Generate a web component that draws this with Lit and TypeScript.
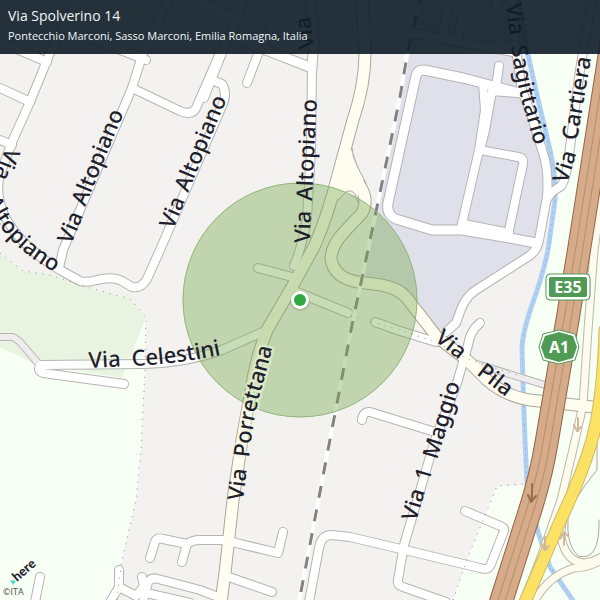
import { LitElement, html, svg, css } from "lit";
import { customElement } from "lit/decorators.js";

type Kind = "street" | "wide" | "track" | "main" | "ramp" | "lane";
interface Road { kind: Kind; d: string; }
interface Label { text: string; d: string; halo?: boolean; }

const roads: Road[] = [
  // north-west quarter
  { kind: "street", d: "M77,0 L50,53 L30,102 L12,142 L1,172 Q-6,190 4,215 Q20,246 60,270 L80,281 Q86,283 97,280 Q112,276 122,281 L132,287 Q141,289 147,279 L160,250 L222,106 Q228,94 222,84 L212,80" },
  { kind: "street", d: "M204,98 L222,53 L244,0" },
  { kind: "street", d: "M0,88 L28,101" },
  { kind: "street", d: "M0,140 L12,145" },
  { kind: "street", d: "M0,42 L47,62" },
  { kind: "street", d: "M62,27 L146,60" },
  { kind: "street", d: "M168,0 L143,53 L132,88 L63,250 L59,268" },
  { kind: "street", d: "M132,88 L180,111 Q192,116 196,108 L220,53" },
  { kind: "street", d: "M192,-2 L235,18" },
  { kind: "street", d: "M270,28 L258,54 L247,83" },
  { kind: "wide", d: "M240,40 L312,68" },
  { kind: "wide", d: "M310,0 L314,40 L312,66" },
  { kind: "street", d: "M312,66 L311,150 L307,217 Q303,244 294,266" },
  // around the marker
  { kind: "street", d: "M258,268 L292,277" },
  { kind: "street", d: "M292,290 L348,313" },
  { kind: "street", d: "M375,322 L400,331 L436,342" },
  { kind: "track", d: "M470,362 L545,385" },
  { kind: "track", d: "M-3,337 L13,337 L19,341 L38,363" },
  { kind: "street", d: "M265,331 L256,335 L222,350 Q186,363 143,364 L41,365 Q36,370 43,373 L124,384" },
  // south-west
  { kind: "street", d: "M40,577 L35,602" },
  { kind: "street", d: "M150,558 L155,542 Q157,537 163,539 L187,544 Q192,540 200,540 L228,540" },
  { kind: "street", d: "M187,544 L182,562" },
  { kind: "street", d: "M232,542 L278,553 L283,532" },
  { kind: "street", d: "M229,577 L272,592" },
  { kind: "street", d: "M142,577 L144,586 L136,596 L119,587 L110,602" },
  { kind: "street", d: "M119,570 L119,587" },
  { kind: "street", d: "M143,602 L148,582 Q151,577 158,579 L200,590 L218,597" },
  { kind: "street", d: "M146,593 L190,603" },
  // south-east
  { kind: "street", d: "M309,602 L319,548 Q321,535 332,535 L350,537 L405,550 L480,568 Q489,571 491,564 L504,531 Q505,527 498,525 L465,511" },
  { kind: "street", d: "M480,323 Q470,331 468,345 L457,383 L435,440 L404,545 L398,580 Q397,585 403,587 L446,602" },
  { kind: "street", d: "M362,420 Q363,411 370,412 L435,432" },
  // business park
  { kind: "wide", d: "M520,93 L463,78 L424,70 Q417,70 416,76 L388,203 Q386,215 396,219 L432,230 L462,230 L510,238 L536,243" },
  { kind: "street", d: "M499,66 L496,87" },
  { kind: "street", d: "M483,84 L485,110 L479,150 L461,228" },
  { kind: "street", d: "M518,93 L492,91 L485,130 L480,150" },
  { kind: "street", d: "M480,150 L518,157 Q524,158 523,164 L508,235" },
  { kind: "street", d: "M464,224 L509,233" },
  { kind: "street", d: "M413,33 L513,52" },
  { kind: "street", d: "M447,10 L442,36" },
  { kind: "street", d: "M462,15 L458,39" },
  { kind: "street", d: "M497,-3 L496,9" },
  { kind: "street", d: "M496,41 L511,48" },
  { kind: "street", d: "M512,0 L516,50 L522,90 L533,120 L543,153 Q549,170 547,197 L539,240 Q537,252 526,258 L476,290 Q465,297 460,312 L456,323 L446,332" },
  { kind: "street", d: "M547,199 L552,192 L561,186 Q566,180 569,155 L580,70 L592,0" },
  // main road, its ramp, and the lanes by the motorway
  { kind: "lane", d: "M604,180 L594,250 L588,330 L583,405 L574,445 L561,500 L540,560 L524,600" },
  { kind: "lane", d: "M568,500 Q560,525 561,537 Q566,562 584,563 Q594,562 603,556" },
  { kind: "lane", d: "M603,559 Q588,568 574,568 Q548,576 534,602" },
  { kind: "ramp", d: "M347,158 Q350,170 360,186 Q369,200 362,213 L345,231 Q331,246 331,259 Q334,278 358,282 L381,285 Q398,288 406,297 L437,337 L467,360 L487,380 Q505,396 530,400 L603,408" },
  { kind: "main", d: "M362,-2 L365,53 Q365,85 353,120 L338,175 Q328,215 315,245 L292,287 L267,330 Q256,358 252,385 L242,440 L233,500 L225,573 L221,602" },
];

const labels: Label[] = [
  { text: "Via", d: "M71,245 L84,214" },
  { text: "Altopiano", d: "M85,207 L125,110" },
  { text: "Via", d: "M173,230 L186,199" },
  { text: "Altopiano", d: "M188,193 L228,96" },
  { text: "Via", d: "M310,243 L311,205" },
  { text: "Altopiano", d: "M312,201 L317,95" },
  { text: "Via", d: "M314,48 L309,8" },
  { text: "Via", d: "M6,147 L-8,182" },
  { text: "Altopiano", d: "M-14,200 Q4,248 64,277" },
  { text: "Via", d: "M89,368 L124,366" },
  { text: "Celestini", d: "M132,366 Q180,364 229,353" },
  { text: "Via", d: "M243,501 L247,468" },
  { text: "Porrettana", d: "M249,458 Q254,410 264,380 Q270,360 276,328", halo: true },
  { text: "Via", d: "M506,4 L510,40" },
  { text: "Sagittario", d: "M511,46 Q516,82 525,112 L538,157" },
  { text: "Via", d: "M567,184 L578,148" },
  { text: "Cartiera", d: "M577,141 L592,52" },
  { text: "Via", d: "M434,340 L464,364" },
  { text: "Pila", d: "M476,374 L512,402" },
  { text: "Via", d: "M416,522 L427,485" },
  { text: "1", d: "M429,482 L434,465" },
  { text: "Maggio", d: "M437,460 L462,378" },
];

const motorway = "M612,40 L579,250 L568,317 L547,440 Q541,478 527,520 L501,602";
const highway = "M605,330 Q603,400 592,440 Q582,475 561,519 L525,602";
const stream = "M519,0 L527,50 L537,95 L550,150 Q556,175 555,200 L548,250 Q543,275 531,308 Q522,335 522,350 L523,383 L525,440 L527,483 L538,532 L550,567 L574,602";
const railway = "M420,0 L408,50 L400,97 L368,250 L353,320 L328,450 L299,602";
const footpaths = [
  "M0,253 L23,271 L50,275 L87,287 L130,299 L146,317 L145,370 L141,450 L136,500 L122,560 L117,600",
  "M453,600 L466,562 L497,486 L526,484",
  "M351,316 L375,323 L400,330 L436,342 L470,360 L520,376",
];
const arrows = [
  { tone: "dark", d: "M532,484 V500 M528,495 L531,502 L536,496" },
  { tone: "pale", d: "M545,537 V549 M541,544 L545,550 L549,546" },
  { tone: "pale", d: "M564,545 V533 M560,539 L564,532 L568,536" },
  { tone: "pale", d: "M578,418 V431 M574,425 L577,431 L581,427" },
];

@customElement("area-map")
export class AreaMap extends LitElement {
  static styles = css`
    :host { display: block; }
    .map { display: block; width: 100%; height: 100%; background: #f3f2f1; }
    .land-field { fill: #f8fff5; }
    .land-park { fill: #e8f4df; }
    .land-business { fill: #e0e0ea; }
    .line { fill: none; stroke-linecap: round; stroke-linejoin: round; }
    .stream { stroke: #b0d0f2; stroke-width: 5; }
    .stream-dots { stroke: #7fa6d6; stroke-width: 1; stroke-dasharray: 1 5; stroke-linecap: butt; }
    .edge { stroke: #b6b4b3; }
    .edge.street { stroke-width: 10; }
    .edge.wide { stroke-width: 11; }
    .edge.track { stroke-width: 8; }
    .edge.main, .edge.ramp { stroke-width: 13; stroke: #aaa89c; }
    .edge.lane { stroke-width: 9; stroke: #bbb9a8; }
    .fill { stroke: #ffffff; }
    .fill.street { stroke-width: 8; }
    .fill.wide { stroke-width: 9; }
    .fill.track { stroke-width: 6; stroke: #eeecec; }
    .fill.main, .fill.ramp { stroke-width: 11; stroke: #fffdf0; }
    .fill.lane { stroke-width: 7; stroke: #fdfbee; }
    .wedge { fill: #fffdf0; }
    .wedge-edge { stroke: #aaa89c; stroke-width: 1; }
    .foot { stroke: #8b8b8b; stroke-width: 1; stroke-dasharray: 1 6; stroke-linecap: butt; }
    .rail-bed { stroke: #ffffff; stroke-width: 4; }
    .rail { stroke: #828282; stroke-width: 3; stroke-dasharray: 12 12; stroke-dashoffset: 8; stroke-linecap: butt; }
    .highway-edge { stroke: #cdb96b; stroke-width: 13; }
    .highway { stroke: #fbe164; stroke-width: 11; }
    .motorway-edge { stroke: #936447; stroke-width: 24; }
    .motorway { stroke: #d6ab8a; stroke-width: 22; }
    .motorway-mid { stroke: #b98c6c; stroke-width: 8; }
    .motorway-core { stroke: #d6ab8a; stroke-width: 6; }
    .arrow { stroke-width: 2; }
    .arrow.dark { stroke: #9b6d50; }
    .arrow.pale { stroke: #d2b79b; }
    .range { fill: rgb(115 167 75 / 40%); stroke: #8fb478; stroke-width: 1; }
    .pin-shade { fill: rgb(90 110 80 / 25%); }
    .pin-rim { fill: #ffffff; }
    .pin { fill: #30aa40; }
    .label { font: 500 22px "Noto Sans", "Open Sans", sans-serif; fill: #1e212b; }
    .label.halo { stroke: rgb(240 246 222 / 55%); stroke-width: 5; stroke-linejoin: round; paint-order: stroke; }
    .shield { fill: #4f9a54; }
    .shield-rim { fill: #ffffff; stroke: #4f9a54; stroke-width: 1; }
    .shield-text { font: bold 16px "Noto Sans", "Open Sans", sans-serif; fill: #ffffff; text-anchor: middle; }
  `;

  render() {
    return html`
      <svg class="map" viewBox="0 0 600 600" preserveAspectRatio="xMidYMid slice" role="img" aria-label="Map of Via Spolverino 14">
        <path class="land-field" d="M0,253 L23,271 L50,275 L87,287 L130,299 L146,317 L145,370 L141,450 L136,500 L122,560 L117,600 H0 Z" />
        <path class="land-park" d="M0,253 L23,271 L50,275 L87,287 L130,299 L146,317 L122,378 L33,363 L0,347 Z" />
        <path class="land-field" d="M519,0 L527,50 L537,95 L550,150 L555,200 L548,250 L531,308 L522,350 L523,383 L527,485 L497,486 L466,562 L453,600 H600 V0 Z" />
        <path class="land-business" d="M420,0 L408,50 L400,97 L366,262 L364,280 L402,288 L438,330 L452,325 L465,297 L530,254 L540,235 L547,180 L533,120 L515,50 L512,0 Z" />
        <path class="line stream" d=${stream} />
        <path class="line stream-dots" d=${stream} />
        ${roads.map((r) => svg`<path class="line edge ${r.kind}" d=${r.d} />`)}
        ${roads.map((r) => svg`<path class="line fill ${r.kind}" d=${r.d} />`)}
        <path class="wedge" d="M346,145 L351,151 Q355,165 364,179 L358,196 L350,191 L338,200 L333,190 Z" />
        <path class="line wedge-edge" d="M352,148 Q353,160 366,183" />
        <path class="line wedge-edge" d="M338,200 L346,192 Q351,189 355,194 L358,202" />
        <path class="line wedge-edge" d="M597,440 L597,470 Q572,500 568,518 Q566,545 578,556 Q600,562 599,520" />
        ${footpaths.map((d) => svg`<path class="line foot" d=${d} />`)}
        <path class="line rail-bed" d=${railway} />
        <path class="line rail" d=${railway} />
        <path class="line highway-edge" d=${highway} />
        <path class="line highway" d=${highway} />
        <path class="line motorway-edge" d=${motorway} />
        <path class="line motorway" d=${motorway} />
        <path class="line motorway-mid" d=${motorway} />
        <path class="line motorway-core" d=${motorway} />
        ${arrows.map((a) => svg`<path class="line arrow ${a.tone}" d=${a.d} />`)}
        <circle class="range" cx="300" cy="300" r="117" />
        <defs>${labels.map((l, i) => svg`<path id=${"run" + i} d=${l.d} />`)}</defs>
        ${labels.map((l, i) => svg`<text class="label ${l.halo ? "halo" : ""}"><textPath href=${"#run" + i}>${l.text}</textPath></text>`)}
        <rect class="shield-rim" x="546" y="274" width="44" height="26" rx="4" />
        <rect class="shield" x="549" y="277" width="38" height="20" rx="2" />
        <text class="shield-text" x="568" y="293">E35</text>
        <path class="shield-rim" d="M559,330 L575,334 L579,347 L575,360 L559,364 L543,360 L539,347 L543,334 Z" />
        <path class="shield" d="M559,332 L573,336 L577,347 L573,358 L559,362 L545,358 L541,347 L545,336 Z" />
        <text class="shield-text" x="559" y="353">A1</text>
        <circle class="pin-shade" cx="300" cy="301" r="10" />
        <circle class="pin-rim" cx="300" cy="300" r="9" />
        <circle class="pin" cx="300" cy="300" r="6" />
      </svg>
    `;
  }
}

@customElement("app-root")
export class AppRoot extends LitElement {
  static styles = css`
    :host {
      display: grid;
      position: relative;
      min-height: 100vh;
      overflow: hidden;
      font-family: "Open Sans", "Noto Sans", sans-serif;
    }
    .canvas { min-height: 0; }
    .place {
      position: absolute;
      inset: 0 0 auto 0;
      padding: 6px 8px 10px;
      background: rgb(15 30 41 / 91%);
      color: #f2f5f6;
    }
    .title { margin: 0; font-size: 14px; line-height: 20px; font-weight: 400; }
    .region { margin: 2px 0 0; font-size: 11px; line-height: 16px; }
    .credit {
      position: absolute;
      left: 3px;
      bottom: 2px;
      font-size: 9px;
      line-height: 12px;
      color: #4a4d50;
    }
    .brand { display: block; width: 36px; height: 28px; overflow: visible; }
    .brand-name { font: 900 13px Lato, "Noto Sans", sans-serif; fill: #22252f; }
    .brand-mark { fill: #48dad0; }
  `;

  render() {
    return html`
      <area-map class="canvas"></area-map>
      <header class="place">
        <h1 class="title">Via Spolverino 14</h1>
        <p class="region">Pontecchio Marconi, Sasso Marconi, Emilia Romagna, Italia</p>
      </header>
      <footer class="credit">
        <svg class="brand" viewBox="0 0 36 28" role="img" aria-label="here">
          <path class="brand-mark" d="M7,22 L13,23 L10,27 Z" />
          <text class="brand-name" transform="translate(14 24) rotate(-41)">here</text>
        </svg>
        <span>©ITA</span>
      </footer>
    `;
  }
}
